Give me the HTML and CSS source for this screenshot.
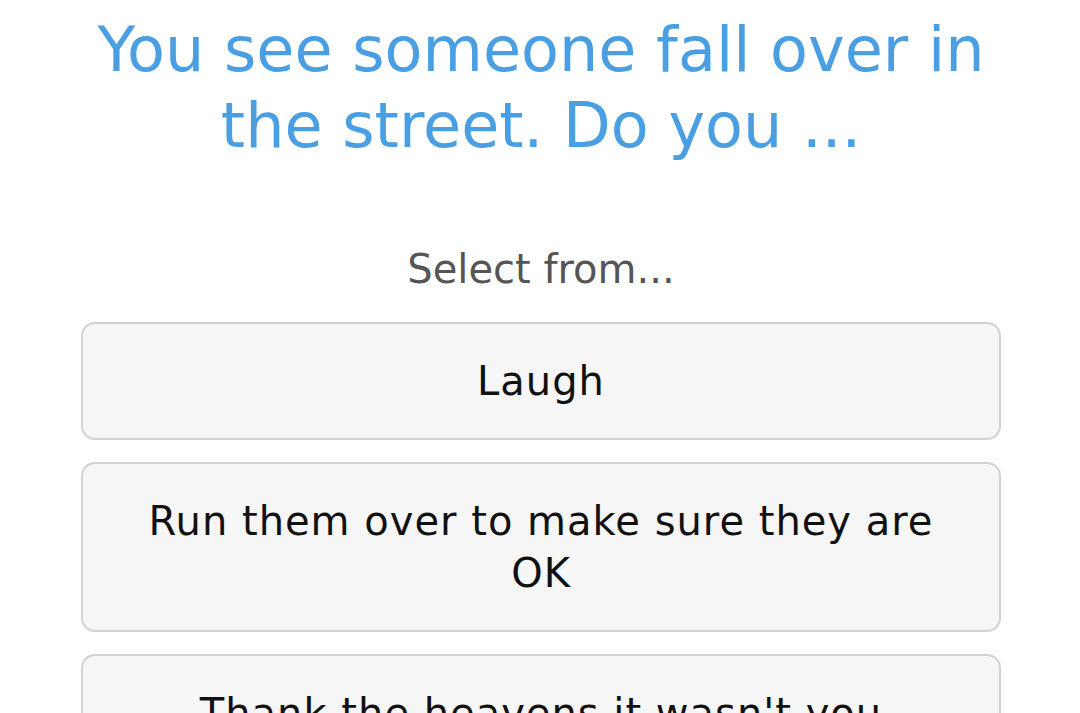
FILE: index.html
```html
<!DOCTYPE html>
<html lang="en">
<head>
<meta charset="utf-8">
<title>Quiz</title>
<link rel="stylesheet" href="styles.css">
</head>
<body>
<main class="quiz">
  <h1 class="question">You see someone fall over in the street. Do you ...</h1>
  <p class="prompt">Select from...</p>
  <div class="options">
    <button class="option">Laugh</button>
    <button class="option">Run them over to make sure they are OK</button>
    <button class="option">Thank the heavens it wasn't you</button>
  </div>
</main>
</body>
</html>
```

FILE: styles.css
```css
html, body {
  margin: 0;
  padding: 0;
  background: #ffffff;
  overflow: hidden;
}

body {
  font-family: "DejaVu Sans", "Open Sans", sans-serif;
}

.quiz {
  padding: 12px 79px 0 81px;
  display: flex;
  flex-direction: column;
  align-items: stretch;
}

.question {
  margin: 0;
  text-align: center;
  color: #4a9fe3;
  font-weight: 400;
  font-size: 62px;
  line-height: 76px;
}

.prompt {
  margin: 79px 0 27px 0;
  text-align: center;
  color: #555555;
  font-size: 40px;
  line-height: 52px;
}

.options {
  display: flex;
  flex-direction: column;
  gap: 22px;
}

.option {
  font-family: inherit;
  font-size: 40px;
  line-height: 52px;
  letter-spacing: 1px;
  color: #111111;
  background: #f6f6f6;
  border: 2px solid #d2d2d2;
  border-radius: 14px;
  padding: 31px 60px;
  text-align: center;
}
```
